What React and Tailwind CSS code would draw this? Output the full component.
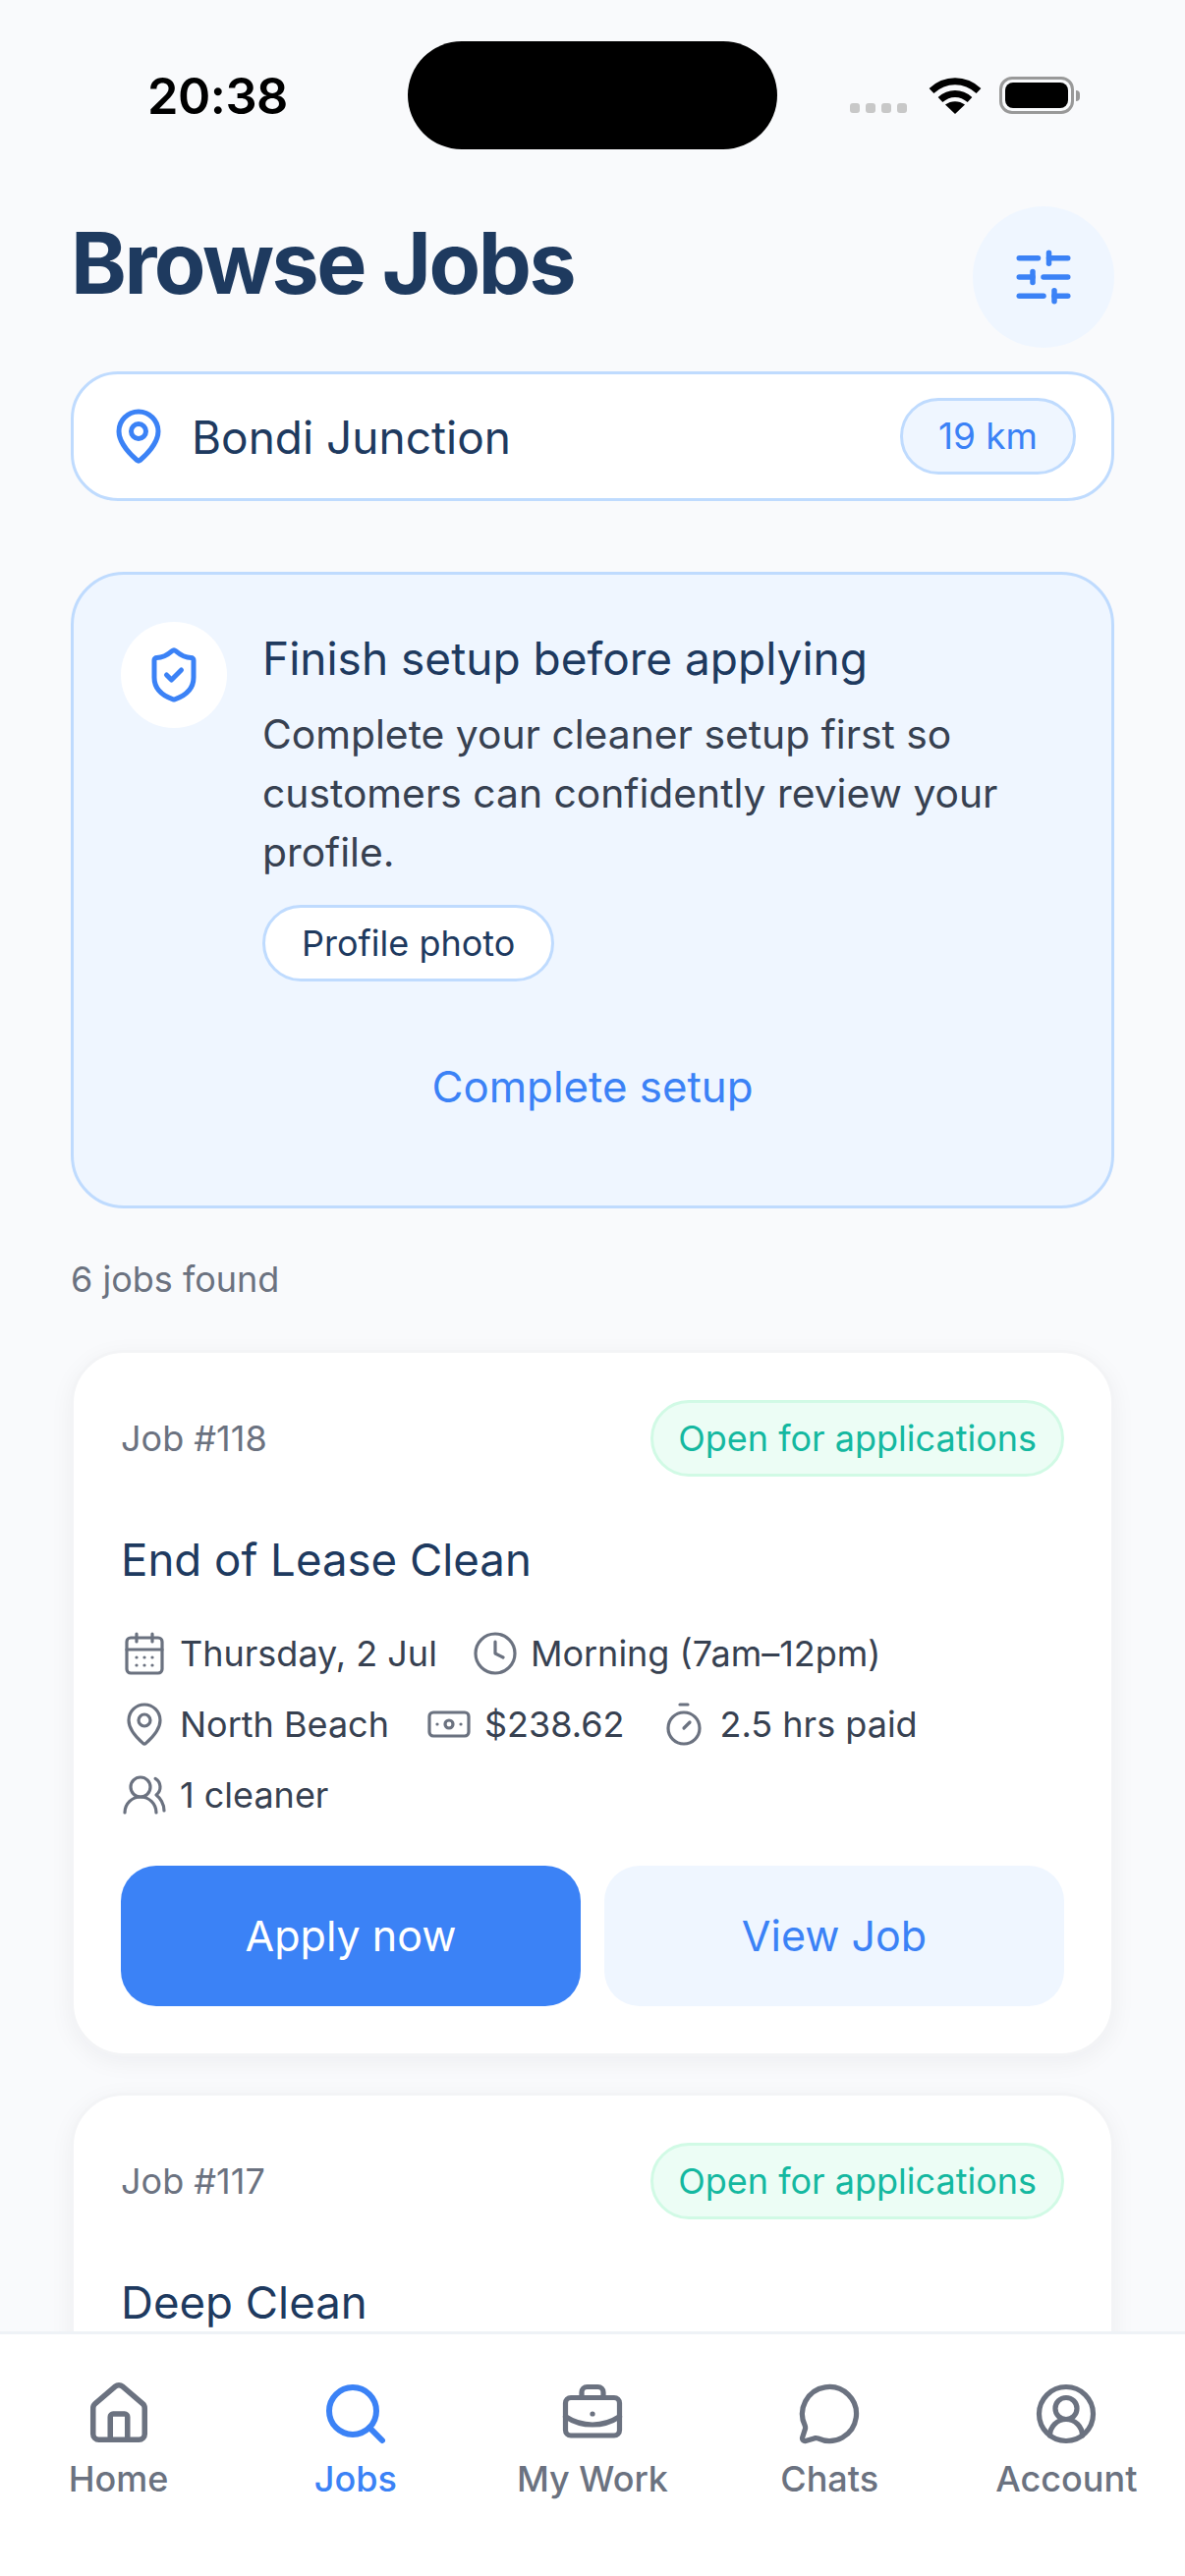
import {
  BriefcaseBusiness,
  Banknote,
  CalendarDays,
  CircleUserRound,
  Clock,
  House,
  MapPin,
  MessageCircle,
  Search,
  ShieldCheck,
  SlidersHorizontal,
  Timer,
  UsersRound,
} from "lucide-react";

const navItems = [
  { label: "Home", Icon: House, size: 70 },
  { label: "Jobs", Icon: Search, size: 72, active: true },
  { label: "My Work", Icon: BriefcaseBusiness, size: 66 },
  { label: "Chats", Icon: MessageCircle, size: 66 },
  { label: "Account", Icon: CircleUserRound, size: 66 },
];

function StatusBar() {
  return (
    <div className="flex h-[210px] shrink-0 items-start pt-[42px]">
      <div className="mt-[27px] w-[415px] pl-[150px] font-['Inter'] text-[50.5px] leading-[58px] font-semibold tracking-[-0.5px] text-black">
        20:38
      </div>
      <div className="h-[110px] w-[376px] rounded-[55px] bg-black" />
      <div className="mt-[36px] ml-[74px] flex items-end">
        <div className="mb-px flex gap-[6px]">
          <span className="h-[10px] w-[10px] rounded-[3px] bg-[#c8c8c8]" />
          <span className="h-[10px] w-[10px] rounded-[3px] bg-[#c8c8c8]" />
          <span className="h-[10px] w-[10px] rounded-[3px] bg-[#c8c8c8]" />
          <span className="h-[10px] w-[10px] rounded-[3px] bg-[#c8c8c8]" />
        </div>
        <svg className="ml-[22px]" width="54" height="38" viewBox="0 0 54 38" fill="none">
          <path d="M3 14.5C17 1.5 37 1.5 51 14.5" stroke="#000" strokeWidth="7" />
          <path d="M12 23.5C21 15.5 33 15.5 42 23.5" stroke="#000" strokeWidth="7" />
          <path d="M27 38L17 28.5C23 24 31 24 37 28.5Z" fill="#000" />
        </svg>
        <div className="ml-[18px] flex items-center">
          <div className="h-[38px] w-[76px] rounded-[13px] border-[3px] border-[#999] p-[3px]">
            <div className="h-full w-full rounded-[8px] bg-black" />
          </div>
          <div className="ml-[2px] h-[11px] w-[4px] rounded-r-[4px] bg-[#999]" />
        </div>
      </div>
    </div>
  );
}

function MetaItem({ Icon, children }) {
  return (
    <div className="flex items-center gap-[12px]">
      <Icon size={48} strokeWidth={1.6} className="shrink-0 text-[#6b7280]" />
      <span>{children}</span>
    </div>
  );
}

function JobCard({ number, title }) {
  return (
    <div className="shrink-0 rounded-[54px] border-[3px] border-[#f3f4f6] bg-white px-[48px] pt-[48px] pb-[48px] shadow-[0_6px_24px_rgba(15,23,42,0.05)]">
      <div className="flex items-center justify-between">
        <span className="text-[36px] text-[#6b7280]">Job #{number}</span>
        <span className="flex h-[78px] items-center rounded-full border-[3px] border-[#d1fae5] bg-[#ecfdf5] px-[25px] text-[36px] text-[#14b8a0]">
          Open for applications
        </span>
      </div>
      <div className="mt-[53px] text-[45.6px] leading-[64px] text-[#1e3a5f]">{title}</div>
      <div className="mt-[27px] flex flex-col text-[36px] text-[#374151]">
        <div className="flex h-[72px] items-center gap-[35px]">
          <MetaItem Icon={CalendarDays}>Thursday, 2 Jul</MetaItem>
          <MetaItem Icon={Clock}>Morning (7am–12pm)</MetaItem>
        </div>
        <div className="flex h-[72px] items-center gap-[37px]">
          <MetaItem Icon={MapPin}>North Beach</MetaItem>
          <MetaItem Icon={Banknote}>$238.62</MetaItem>
          <MetaItem Icon={Timer}>2.5 hrs paid</MetaItem>
        </div>
        <div className="flex h-[72px] items-center">
          <MetaItem Icon={UsersRound}>1 cleaner</MetaItem>
        </div>
      </div>
      <div className="mt-[36px] flex gap-[24px]">
        <button className="h-[143px] flex-1 rounded-[36px] bg-[#3b82f6] text-[43px] text-white">Apply now</button>
        <button className="h-[143px] flex-1 rounded-[36px] bg-[#eff6ff] text-[43px] text-[#3b82f6]">View Job</button>
      </div>
    </div>
  );
}

export default function App() {
  return (
    <div className="flex h-[2622px] w-[1206px] flex-col overflow-hidden bg-[#f9fafc] font-['Inter',sans-serif]">
      <div className="flex min-h-0 flex-1 flex-col overflow-hidden">
        <StatusBar />
        <div className="flex flex-col px-[72px]">
          <div className="flex h-[144px] items-start justify-between">
            <h1 className="mt-[8px] text-[86px] leading-[100px] font-bold tracking-[-2.5px] text-[#1e3a5f]">Browse Jobs</h1>
            <button className="flex h-[144px] w-[144px] items-center justify-center rounded-full bg-[#eff6ff] text-[#3b82f6]">
              <SlidersHorizontal size={66} strokeWidth={2} />
            </button>
          </div>
          <div className="mt-[24px] flex h-[132px] items-center rounded-[48px] border-[3px] border-[#bfdbfe] bg-white pr-[36px] pl-[36px]">
            <MapPin size={60} strokeWidth={2} className="text-[#3b82f6]" />
            <span className="ml-[24px] flex-1 pt-[2px] text-[46px] text-[#1e3a5f]">Bondi Junction</span>
            <span className="flex h-[78px] items-center rounded-full border-[3px] border-[#bfdbfe] bg-[#eff6ff] px-[36px] text-[37px] text-[#3b82f6]">19 km</span>
          </div>
          <div className="mt-[72px] h-[648px] rounded-[54px] border-[3px] border-[#bfdbfe] bg-[#eff6ff] pt-[48px] pr-[48px] pl-[48px]">
            <div className="flex gap-[36px]">
              <div className="flex h-[108px] w-[108px] shrink-0 items-center justify-center rounded-full bg-white">
                <ShieldCheck size={60} strokeWidth={2} className="text-[#3b82f6]" />
              </div>
              <div className="mt-[4px] flex flex-col items-start">
                <div className="text-[46px] leading-[66px] text-[#1e3a5f]">Finish setup before applying</div>
                <p className="mt-[14px] text-[40.8px] leading-[60px] text-[#374151]">
                  Complete your cleaner setup first so customers can confidently review your profile.
                </p>
                <span className="mt-[24px] flex h-[78px] items-center rounded-full border-[3px] border-[#bfdbfe] bg-white px-[37px] text-[36px] text-[#1e3a5f]">Profile photo</span>
              </div>
            </div>
            <div className="mt-[78px] text-center text-[43.8px] leading-[60px] text-[#3b82f6]">Complete setup</div>
          </div>
          <div className="mt-[50px] text-[36px] leading-[44px] text-[#6b7280]">6 jobs found</div>
          <div className="mt-[50px] flex flex-col gap-[37px]">
            <JobCard number="118" title="End of Lease Clean" />
            <JobCard number="117" title="Deep Clean" />
          </div>
        </div>
      </div>
      <nav className="z-10 flex h-[249px] shrink-0 border-t-[3px] border-[#eef2f6] bg-white pt-[45px]">
        {navItems.map(({ label, Icon, size, active }) => (
          <div key={label} className={`flex w-[241.2px] flex-col items-center ${active ? "text-[#3b82f6]" : "text-[#6b7280]"}`}>
            <div className="flex h-[72px] items-center justify-center">
              <Icon size={size} strokeWidth={active ? 2 : 1.9} />
            </div>
            <span className="mt-[8px] text-[36px] leading-[44px] font-medium">{label}</span>
          </div>
        ))}
      </nav>
    </div>
  );
}
